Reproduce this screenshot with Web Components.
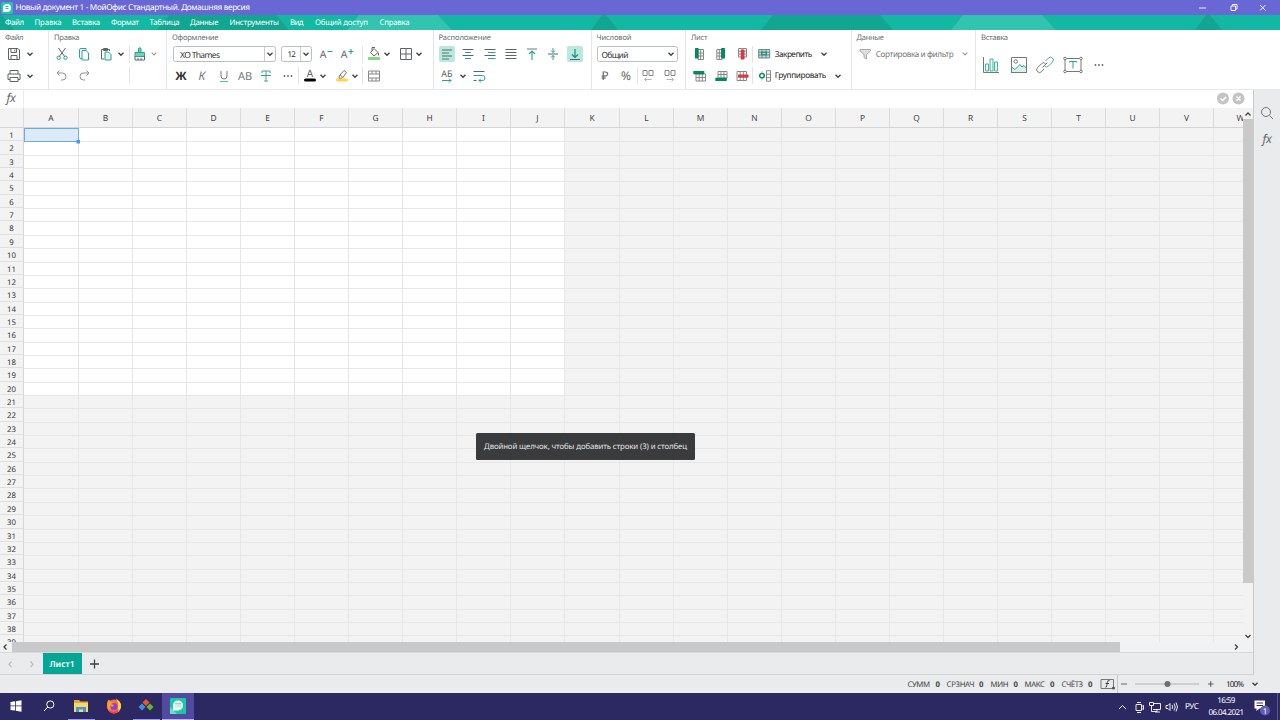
<!DOCTYPE html>
<html lang="ru">
<head>
<meta charset="utf-8">
<title>МойОфис Таблица</title>
<style>
html,body{margin:0;height:100%;overflow:hidden;background:#f3f3f3}
body{font-family:"Noto Sans","Open Sans",sans-serif;font-size:8px;color:#333;text-rendering:geometricPrecision}
</style>
</head>
<body>
<office-app></office-app>
<script>
const define = (name, css, html, after) => customElements.define(name, class extends HTMLElement {
  connectedCallback() {
    if (this.shadowRoot) return;
    const root = this.attachShadow({mode: 'open'});
    const body = typeof html === 'function' ? html(this) : html;
    root.innerHTML = `<style>*{box-sizing:border-box}:host{box-sizing:border-box;display:block}${css}</style>${body}`;
    if (after) after(this, root);
  }
});

/* Text whose tracking is tuned so that it takes a given width */
define('fit-text', ':host{display:inline-block;white-space:nowrap;flex:none;line-height:1.3;padding-top:2px}', '<slot></slot>', el => {
  const w = +el.getAttribute('w'), n = el.textContent.length;
  const range = document.createRange();
  range.selectNodeContents(el);
  const natural = range.getBoundingClientRect().width;
  if (w && n > 1) el.style.letterSpacing = ((w - natural) / (n - 1)).toFixed(3) + 'px';
});
const T = (text, w, style = '') => `<fit-text w="${w}" style="${style}">${text}</fit-text>`;

const G = '#5e6468', M = '#27a592', R = '#d93a45', D = '#008b57';
const p = (d, c = G, w = 1, f = 'none') => `<path d="${d}" stroke="${c}" stroke-width="${w}" fill="${f}"/>`;
const glyph = (ch, x, y, size, c = G, extra = '') => `<text x="${x}" y="${y}" font-size="${size}" fill="${c}" text-anchor="middle" ${extra}>${ch}</text>`;
const box = (x, y, w, h, c) => `<rect x="${x}" y="${y}" width="${w}" height="${h}" rx=".4" fill="${c}"/>`;
const ICONS = {
  save: p('M2.500 2.500H12l1.500 1.500v9.500h-11zM5 2.500v4h5.500v-4M5 13V9.500h6V13M8.800 3.500v2'),
  print: p('M4 6V2.500h8V6M4 11.500H2V6h12v5.500h-2M4 9.500h8v4H4z'),
  cut: p('M4.500 2L11 11M11.500 2L5 11') + p('M3 11.800a1.700 1.700 0 1 0 3.400 0a1.700 1.700 0 1 0-3.400 0M9.800 11.800a1.700 1.700 0 1 0 3.400 0a1.700 1.700 0 1 0-3.400 0', M),
  copy: p('M6 12.500H5a1.500 1.500 0 0 1-1.500-1.500V4A1.500 1.500 0 0 1 5 2.500h5V4.500', M) + p('M6 4.500h4l2.500 2.500v7H6z', M, 1, '#fff'),
  paste: p('M6 13H3.500V3.500h8V5M5.500 4.500v-2h4v2z') + p('M7 6h3.500L13 8.500V14H7z', M, 1, '#def3ef'),
  brush: p('M6.500 6V3a1.200 1.200 0 0 1 2.500 0V6M3 10.500V6.500H12.500V10.500z', M, 1, '#6fd1bc') + p('M3 10v4h9.500v-4M6 14v-2M9 14v-2'),
  undo: p('M5.500 2.500L3 5l2.500 2.500M3 5h5.500a3 3 0 0 1 0 7H7', '#8b8f92'),
  redo: p('M10.500 2.500L13 5l-2.500 2.500M13 5H7.500a3 3 0 0 0 0 7H9', '#8b8f92'),
  bold: glyph('Ж', 8, 12, 11.5, '#333', 'font-weight="700"'),
  italic: glyph('К', 8, 12, 12, '#777', 'font-style="italic"'),
  under: p('M5 3v5a3 3 0 0 0 6 0V3', '#777') + p('M4 13.500h8', '#62c2b0', 1.200),
  caps: glyph('АВ', 8, 12, 11, '#777'),
  strike: p('M4 5V3h8v2M8 3v10M6 13h4', '#4f9d92') + p('M3 7.500h10', M),
  dots: '<g fill="#666"><circle cx="4.500" cy="8" r=".9"/><circle cx="8" cy="8" r=".9"/><circle cx="11.500" cy="8" r=".9"/></g>',
  fontcol: glyph('А', 8, 9, 10, '#555') + box(2, 10.500, 12, 3, '#000').replace('rx=".4"', 'rx="1.500"'),
  marker: p('M5 10.500l.5-3 4.500-5 2.500 2-4 5.500zM6 7l2.500 2', '#777') + box(2, 10.500, 12, 3, '#ffd53f').replace('rx=".4"', 'rx="1.500"'),
  aminus: glyph('A', 6, 12, 10.500, '#666') + p('M10.500 5.500h5', M, 1.100),
  aplus: glyph('A', 6, 12, 10.500, '#666') + p('M10.500 5.500h5M13 3v5', M, 1.100),
  fill: p('M8 2.500L12 6.500 8 10 4.500 6.500zM6 5V1.500h3M12.500 7v2.500', '#666') + box(2, 11, 12, 3, '#86d68a'),
  border: p('M2.500 2.500h11v11h-11zM8 2.500v11M2.500 8h11'),
  merge: p('M2.500 3h11v10h-11zM2.500 6h11M2.500 10h11M6 3v3M10 3v3M6 10v3M10 10v3', '#888'),
  left: p('M3 4h10M3 10h10') + p('M3 7h7M3 13h7', '#3c8479'),
  center: p('M2.500 3.500h11M2.500 9.500h11') + p('M5 6.500h6M5 12.500h6', M),
  right: p('M2.500 3.500h11M2.500 9.500h11') + p('M6 6.500h7.500M6 12.500h7.500', M),
  justify: p('M2.500 3.500h11M2.500 6.500h11M2.500 9.500h11M2.500 12.500h11'),
  top: p('M3 3h10', '#777') + p('M8 14V5M5 8l3-3 3 3', M, 1.100),
  middle: p('M3 8h10') + p('M8 2v4.500M6 4.500l2 2 2-2M8 14V9.500M6 11.500l2-2 2 2', M),
  bottom: p('M3 13.500h10') + p('M8 3v8.500M5 8.500l3 3 3-3', '#168d7c', 1.200),
  abdir: glyph('АБ', 8, 9, 9) + p('M3 12.500h9M10 10.500l2 2-2 2', M),
  wrap: p('M2.500 3.500h11M2.500 12.500h3') + p('M2.500 7.500h9a2.500 2.500 0 0 1 0 5H8M10 10.500l-2 2 2 2', M),
  rub: glyph('₽', 8, 12.300, 12, '#666'),
  pct: glyph('%', 8, 12, 12, '#666'),
  decl: p('M3 2.500h4v5h-4zM9 2.500h4v5h-4z', '#888') + p('M4.500 11.500h7M6.500 9.500l-2 2 2 2', '#b5b5b5'),
  decr: p('M3 2.500h4v5h-4zM9 2.500h4v5h-4z', '#888') + p('M4.500 11.500h7M9.500 9.500l2 2-2 2', '#b5b5b5'),
  colL: p('M7 3.500h5.500v10H7zM9.700 3.500v10M7 7h5.500M7 10h5.500', '#888') + box(4, 2, 3.600, 10.500, D),
  colR: p('M3.800 3.500H9v10H3.800zM6.300 3.500v10M3.800 7H9M3.800 10H9', '#888') + box(8.100, 2, 3.900, 10.500, D),
  colD: p('M4.500 2.500h8v8.500h-8zM4.500 5.200h8M4.500 8h8', '#888') + box(6.700, 3.500, 3.800, 10, R),
  rowT: p('M5 6h9.500v7H5zM8.200 6v7M11.300 6v7M5 9.500h9.500', '#888') + box(2.300, 3, 11, 3.300, D),
  rowB: p('M5 3.500h9v6.500H5zM8 3.500v6.500M11 3.500v6.500M5 6.500h9', '#888') + box(2.300, 9.700, 11.500, 3.300, D),
  rowD: p('M3 3.500h9.500v9H3zM6.200 3.500v9M9.300 3.500v9', '#888') + box(4, 6.500, 10.500, 3.200, R),
  freeze: p('M2.700 3.500h11v8.500h-11zM2.700 9h11M2.700 6.200h11M6 3.500v8.500M10 3.500v8.500', '#61807c', .9, '#b9e2da') + p('M5.500 6.200h5v2.500h-5z', '#168c7a', 1),
  group: p('M10.500 2.700h4v10.500h-4zM10.500 6.200h4M10.500 9.700h4', '#888') + p('M3.700 7.700a2.300 2.300 0 1 0 4.600 0a2.300 2.300 0 1 0-4.600 0', D, 1.500) + p('M6 3v2M6 10.500v2', '#7cc7a8', .8),
  filter: p('M3 3.500h10.500v1.500L9.500 8.500V13l-2.500-1.500v-3L3 5z', '#aaa', 1, '#ddd'),
  search: p('M2.500 7a4.500 4.500 0 1 0 9 0a4.500 4.500 0 1 0-9 0M10.500 10.500l3.500 3.500', '#777'),
  fx: glyph('fx', 8, 12, 12, '#666', 'font-style="italic" letter-spacing="-.3"'),
  chev: p('M5.500 6.700L8 9.200l2.500-2.500', '#444', 1.400),
  chevd: p('M5.700 6.700L8 9l2.300-2.300', '#999', 1.100),
  plus: p('M4 8h9M8.500 3.500v9', '#444', 1.300),
  prev: p('M8.500 5.500L6 8.300l2.500 2.800', '#bbb', 1.200),
  next: p('M6.500 5.500L9 8.300l-2.500 2.800', '#bbb', 1.200)
};
const BIG = {
  chart: p('M2.500 2v15.500H18', '#777') + p('M4.500 16V9h3v7zM9 16V4h3v12zM13.500 16V7h3v9z', '#49b3a3', 1, '#e6f7f3'),
  image: p('M2.500 12l3.500 2.500 5-5 2 2.500 2-1.500 2.500 3v4h-15z', M, 1, '#d8f1ec') + p('M2.500 2.500h15v15h-15zM5 6.500a1.700 1.700 0 1 0 3.400 0a1.700 1.700 0 1 0-3.400 0', '#777'),
  link: p('M10.500 6l3-3a2.700 2.700 0 0 1 4 4l-4 4a2.700 2.700 0 0 1-4 0', '#5aa79c') + p('M9 14l-2.500 2.700a2.700 2.700 0 0 1-4-4l4-4a2.700 2.700 0 0 1 4 0M7.500 12.500l5-5', '#777'),
  box: p('M2 3.500h16v13H2z', '#777') + p('M6.500 7.500V6.500h7v1M10 6.500v7', M) + '<g fill="#fff" stroke="#777"><circle cx="2" cy="3.500" r="1.300"/><circle cx="18" cy="3.500" r="1.300"/><circle cx="2" cy="16.500" r="1.300"/><circle cx="18" cy="16.500" r="1.300"/></g>'
};
define('ui-icon', ':host{display:block;width:16px;height:16px;flex:none}svg{display:block;overflow:visible}:host([active]){background:#b9e8df;border-radius:2px}:host([big]){width:20px;height:20px}',
  el => { const n = el.getAttribute('name'), b = el.hasAttribute('big'), s = b ? 20 : 16;
    return `<svg width="${s}" height="${s}" viewBox="0 0 ${s} ${s}">${(b ? BIG : ICONS)[n]}</svg>`; });

define('drop-box', ':host{display:flex;align-items:center;height:16px;border:1px solid #b9c0c4;border-radius:2.500px;background:#fff;flex:none;color:#333;font-size:8.500px;padding-left:6px}.t{flex:1;display:flex}.c{width:11px;height:14px;display:flex;align-items:center;justify-content:center;border-left:1px solid #c8cdd0}:host([plain]) .c{border:0}',
  '<span class="t"><slot></slot></span><span class="c"><ui-icon name="chev"></ui-icon></span>');

/* A toolbar row: items are [centre, width, markup], spaced from the group's left edge */
const row = (start, items, h = 21.500) => {
  let x = start;
  return `<div class="row" style="height:${h}px">` + items.map(([c, w, html]) => {
    const m = c - w / 2 - x; x = c + w / 2;
    return `<span class="it" style="width:${w}px;margin-left:${m}px">${html}</span>`;
  }).join('') + '</div>';
};
const I = (c, n, a = '') => [c, 16, `<ui-icon name="${n}" ${a}></ui-icon>`];
const L = (x, w, t, st) => [x + w / 2, w, T(t, w, st)];
const S = c => [c, 1, '<i class="sep"></i>'];

define('tool-group', ':host{flex:none;height:59px;border-right:1px solid #e3e6e8;padding-top:2.500px}:host(:last-child){border:0;flex:1}.h{height:11px;display:flex;align-items:center;padding-left:5px;color:#697075;font-size:7.600px}.row{display:flex;align-items:center}.it{display:flex;flex:none;justify-content:center;align-items:center}.sep{width:1px;height:17px;background:#e2e5e7}',
  el => { const g = GROUPS[+el.getAttribute('index')]; return `<div class="h">${T(g.t, g.tw)}</div>${g.rows.map(r => row(g.x, r, g.h)).join('')}`; });

const GROUPS = [
  {t: 'Файл', tw: 18.500, x: 0, w: 49, rows: [[I(14, 'save'), I(30, 'chev')], [I(14, 'print'), I(30, 'chev')]]},
  {t: 'Правка', tw: 25.500, x: 49, w: 118, rows: [[I(61.500, 'cut'), I(83.500, 'copy'), [105.500, 15, '<ui-icon name="paste"></ui-icon>'], [120.500, 14, '<ui-icon name="chev"></ui-icon>'], S(129.500), [140, 14, '<ui-icon name="brush"></ui-icon>'], [153.500, 12, '<ui-icon name="chevd"></ui-icon>']], [I(61.500, 'undo'), I(83.500, 'redo'), S(129.500)]]},
  {t: 'Оформление', tw: 46.500, x: 167, w: 266.500, rows: [
    [[224.500, 103, `<drop-box style="width:103px">${T('XO Thames', 40)}</drop-box>`], [296.700, 30.500, `<drop-box style="width:30.500px;padding-left:5px">${T('12', 8.500, 'font-size:8px')}</drop-box>`], I(325.500, 'aminus'), I(346.500, 'aplus'), S(362.500), [374, 14, '<ui-icon name="fill"></ui-icon>'], [387.500, 12, '<ui-icon name="chev"></ui-icon>'], [406, 14, '<ui-icon name="border"></ui-icon>'], [419.500, 12, '<ui-icon name="chev"></ui-icon>']],
    [I(180.500, 'bold'), I(201.500, 'italic'), I(223.500, 'under'), I(245, 'caps'), I(265.500, 'strike'), [287.500, 14, '<ui-icon name="dots"></ui-icon>'], S(298.500), [309.500, 14, '<ui-icon name="fontcol"></ui-icon>'], [322.500, 12, '<ui-icon name="chev"></ui-icon>'], [341.500, 14, '<ui-icon name="marker"></ui-icon>'], [354.500, 12, '<ui-icon name="chev"></ui-icon>'], S(362.500), [373.500, 16, '<ui-icon name="merge"></ui-icon>']]]},
  {t: 'Расположение', tw: 52.500, x: 433.500, w: 158, rows: [
    [I(446.500, 'left', 'active'), I(468, 'center'), I(489.500, 'right'), I(510.500, 'justify'), I(532, 'top'), I(553, 'middle'), I(574.500, 'bottom', 'active')],
    [[446.500, 16, '<ui-icon name="abdir"></ui-icon>'], [462.500, 14, '<ui-icon name="chev"></ui-icon>'], [478.500, 16, '<ui-icon name="wrap"></ui-icon>']]]},
  {t: 'Числовой', tw: 35, x: 591.500, w: 94.500, rows: [
    [[637, 81, `<drop-box plain style="width:81px;padding-left:4px">${T('Общий', 27)}</drop-box>`]],
    [I(604.500, 'rub'), I(625.500, 'pct'), S(637), I(648, 'decl'), I(670, 'decr')]]},
  {t: 'Лист', tw: 16.500, x: 686, w: 165.500, rows: [
    [I(699, 'colL'), I(720.500, 'colR'), I(742, 'colD'), S(752.500), [764, 16, '<ui-icon name="freeze"></ui-icon>'], L(774.500, 37.500, 'Закрепить', 'font-size:8.200px;color:#222'), I(823.500, 'chev')],
    [I(699, 'rowT'), I(720.500, 'rowB'), I(742, 'rowD'), S(752.500), [764, 16, '<ui-icon name="group"></ui-icon>'], L(774.500, 51.500, 'Группировать', 'font-size:8.200px;color:#222'), I(837.500, 'chev')]]},
  {t: 'Данные', tw: 27.500, x: 851.500, w: 124.500, rows: [[I(865, 'filter'), L(875.500, 78, 'Сортировка и фильтр', 'font-size:8.200px;color:#777'), I(964.500, 'chevd')]]},
  {t: 'Вставка', tw: 27, x: 976, w: 304, h: 43, rows: [[...[['chart', 991], ['image', 1018.500], ['link', 1045], ['box', 1072.500]].map(([n, c]) => [c, 20, `<ui-icon big name="${n}"></ui-icon>`]), I(1099, 'dots')]]}
];
define('tool-bar', ':host{display:flex;height:60px;background:#fff;border-bottom:1px solid #e6e9ea;flex:none}',
  GROUPS.map((g, i) => `<tool-group index="${i}" style="width:${g.w}px"></tool-group>`).join(''));

define('title-bar', ':host{display:flex;align-items:center;height:15px;background:#6967d3;color:#fff;font-size:8.200px;flex:none;padding:0 13px 0 1px}.ctl{margin-left:auto}fit-text{margin-left:2.500px}',
  `<svg width="12" height="12"><rect width="12" height="12" rx="2" fill="#20c8a5"/><circle cx="6" cy="6" r="4" fill="#fff"/><path d="M2 5v5h4z" fill="#fff"/><path d="M4.500 4.500h3M4.500 6.500h3" stroke="#20bfa0"/></svg>${T('Новый документ 1 - МойОфис Стандартный. Домашняя версия', 234.500)}
  <svg class="ctl" width="70" height="14" fill="none" stroke="#fff" stroke-width=".9"><path d="M2 7h7M34 5h4.500v4.500H34zM35.500 5V3.500h4.500v4.500h-1.500M63 4l5.500 5.500M68.500 4L63 9.500"/></svg>`);

const tri = [-604, 0, 604].map(o => `<path fill="#10a692" d="M${o + 591} 15l11-15h4l12 15zM${o + 761} 15l12-15h107l13 15z"/><path fill="#31c4b0" d="M${o + 951} 15l12-15h79l14 15z"/>`).join('');
define('menu-bar', ':host{display:grid;height:15px;background:#13b8a2;color:#fff;font-size:7.800px;flex:none}svg,nav{grid-area:1/1}nav{display:flex;align-items:center;padding-left:5px}',
  `<svg width="1280" height="15">${tri}</svg><nav>` + (() => { let x = 5; return [['Файл', 5, 19], ['Правка', 34.500, 27], ['Вставка', 72, 28], ['Формат', 111, 28], ['Таблица', 149.500, 30], ['Данные', 190, 28.500], ['Инструменты', 229.500, 49.500], ['Вид', 290, 13.500], ['Общий доступ', 315, 53], ['Справка', 379.500, 30]].map(([t, l, w]) => { const s = T(t, w, `width:${w}px;margin-left:${l - x}px`); x = l + w; return s; }).join(''); })() + '</nav>');

define('formula-bar', ':host{display:flex;align-items:center;height:18px;background:#fff;flex:none;border-bottom:0}.fx{width:24px;height:18px;padding:0 3px;border-right:1px solid #ececec}.b{margin-left:auto;margin-right:8px}',
  '<div class="fx"><ui-icon name="fx"></ui-icon></div><svg class="b" width="28" height="14"><g fill="#c4c4c4"><circle cx="6" cy="6.500" r="6"/><circle cx="21.500" cy="6.500" r="6"/></g><path d="M3.500 6.500l2 2 3.500-3.500M19.500 4.500l4 4M23.500 4.500l-4 4" fill="none" stroke="#fff" stroke-width="1.500"/></svg>');

const cx = n => Math.floor(24.250 + 54.070 * n), ry = n => Math.round(13.350 * n);
define('sheet-grid', `:host{flex:1;min-width:0;overflow:hidden;display:grid;grid-template:20px 1fr/24px 1fr;background:#f3f3f3}
.cols{display:flex;overflow:hidden;border-bottom:1px solid #d4d4d4;font-size:8.400px;color:#444}.cols div,.corner{border-right:1px solid #dadada;flex:none;display:flex;align-items:center;justify-content:center}.cols div{padding-top:1px}.corner{border-bottom:1px solid #d4d4d4}
.rows{overflow:hidden;border-right:1px solid #d6d6d6;font-size:7.800px}.rows div{display:flex;align-items:center;justify-content:center;border-bottom:1px solid #e0e0e0;padding-top:3px;line-height:10px}
.cells{overflow:hidden}svg{display:block}`, () => {
  let lines = '';
  for (let i = 1; i < 23; i++) lines += `<rect x="${cx(i) - 24}" y="0" width="1" height="520" fill="#e7e7e7"/>`;
  for (let i = 1; i < 39; i++) lines += `<rect x="0" y="${ry(i)}" width="1230" height="1" fill="#e7e7e7"/>`;
  return `<div class="corner"></div><div class="cols">${[...'ABCDEFGHIJKLMNOPQRSTUVW'].map((c, i) => `<div style="width:${cx(i + 1) - (i ? cx(i) : 23)}px">${c}</div>`).join('')}</div>
  <div class="rows">${Array.from({length: 39}, (_, i) => `<div style="height:${ry(i + 1) - ry(i)}px">${i + 1}</div>`).join('')}</div>
  <div class="cells"><svg width="1230" height="520"><rect width="540" height="267" fill="#fff"/>${lines}<rect x=".5" y=".5" width="54" height="13" fill="#dbebfa" stroke="#69aaf0"/><rect x="52.500" y="12" width="3.500" height="3.500" fill="#4b98ef"/></svg></div>`;
});

define('v-scroll', ':host{width:10px;flex:none;background:#f2f2f2;display:flex;flex-direction:column}.th{height:464px;background:#c9c9c9;margin-top:11px}svg{margin-top:auto;margin-bottom:0}',
  '<svg width="10" height="11" style="margin:0 0 -11px" fill="none" stroke="#444" stroke-width="1.300"><path d="M2.500 7.500L5 5l2.500 2.500"/></svg><div class="th"></div><svg width="10" height="12" fill="none" stroke="#444" stroke-width="1.300"><path d="M2.500 5L5 7.500 7.500 5"/></svg>');
define('h-scroll', ':host{height:11px;flex:none;background:#f2f2f2;display:flex;border-bottom:1px solid #d6d9dc}.th{width:1108px;height:10px;background:#c9c9c9}svg{flex:none}.r{margin-left:auto;margin-right:11px}',
  '<svg width="12" height="10" fill="none" stroke="#444" stroke-width="1.300"><path d="M6.500 2.500L4 5l2.500 2.500"/></svg><div class="th"></div><svg class="r" width="11" height="10" fill="none" stroke="#444" stroke-width="1.300"><path d="M4 2.500L6.500 5 4 7.500"/></svg>');

define('sheet-tabs', ':host{display:flex;align-items:center;height:22px;background:#e9ebed;flex:none;padding-left:2.500px;border-bottom:1px solid #cfd3d6}.tab{height:21px;width:39px;margin-left:3px;background:#05a794;color:#fff;font-size:8.500px;font-weight:600;display:flex;align-items:center;justify-content:center}.n{margin-left:5px}.p{margin-left:4px}',
  `<ui-icon name="prev"></ui-icon><ui-icon class="n" name="next"></ui-icon><div class="tab">${T('Лист1', 25)}</div><ui-icon class="p" name="plus"></ui-icon>`);

define('status-bar', ':host{display:flex;align-items:center;height:18px;background:#e9ebed;flex:none;padding-left:907.500px;font-size:7.800px;color:#444}fit-text{flex:none}svg{flex:none}', () => {
  let x = 907.500, out = '';
  const add = (t, l, w, st = '') => { out += T(t, w, `width:${w}px;margin-left:${l - x}px;${st}`); x = l + w; };
  [['СУММ', 907.500, 22.500, 935.500], ['СРЗНАЧ', 946.500, 28, 979], ['МИН', 990.500, 18, 1013.500], ['МАКС', 1024.500, 20.500, 1050], ['СЧЁТЗ', 1061.500, 21.500, 1088]].forEach(([t, l, w, z]) => { add(t, l, w); add('0', z, 4.500, 'font-weight:700'); });
  out += `<svg width="138" height="18" style="margin-left:${1100 - x}px"><path d="M1 4.500h12.500v9H1z" fill="none" stroke="#777"/><path d="M9.500 5.500q-2-.5-2.200 2l-.5 3q0 2-1.500 1.500M5.500 8.500h3.500" fill="none" stroke="#444" stroke-width="1"/><circle cx="13.500" cy="13" r="1.500" fill="#555"/><path d="M17.500 0v18" stroke="#c8c8c8"/><path d="M21 9h6M108 9h5.500M110.700 6.300v5.500" stroke="#666" stroke-width="1.200"/><path d="M35 9h64" stroke="#c6c6c6" stroke-width="1.500"/><circle cx="67.500" cy="9" r="3" fill="#707070"/></svg>`;
  x = 1238; add('100%', 1226, 18, 'font-size:8.200px;color:#222');
  return out + '<ui-icon name="chev" style="margin-left:2.500px"></ui-icon>';
});

define('side-bar', ':host{width:27px;flex:none;background:#e9ebed;border-left:1px solid #c9cccf;display:flex;flex-direction:column;align-items:center;padding-top:14.500px;gap:10.500px}', '<ui-icon name="search"></ui-icon><ui-icon name="fx"></ui-icon>');

define('task-bar', `:host{display:flex;height:27px;background:#2c2861;color:#fff;flex:none}
.app{width:32.500px;display:flex;align-items:center;justify-content:center;border-bottom:1px solid transparent}.run{width:26.500px;margin:0 3px;border-color:#9b93ff;border-bottom-width:1.500px}.on{width:32px;background:#514aa0;border-color:#b8b3ff;border-bottom-width:1.500px;margin-left:-1px}
.tray{margin-left:auto;display:flex;align-items:center;font-size:8px}.time{width:40px;display:flex;flex-direction:column;align-items:center;line-height:12px}.time fit-text{line-height:12px;padding:0}`,
`<div class="app"><svg width="12" height="12" fill="#fff"><path d="M.5 2L5 1.300v4.200H.5zM5.800 1.200L11.500.3v5.200H5.800zM.5 6.300H5v4.300L.5 10zM5.800 6.300h5.700v5.400l-5.700-.9z"/></svg></div>
<div class="app"><svg width="12" height="12" fill="none" stroke="#fff"><circle cx="7.300" cy="4.500" r="3.600"/><path d="M4.800 7L1 11"/></svg></div>
<div class="app run"><svg width="16" height="14"><path d="M1 1h5l1.500 1.500H15V13H1z" fill="#e8a63a"/><path d="M1 4h14v9H1z" fill="#ffd768"/><path d="M3 13V8h10v5h-3v-2.500H6V13z" fill="#3d98d8"/></svg></div>
<div class="app"><svg width="16" height="16"><circle cx="8" cy="8.500" r="7" fill="#ff6b35"/><path d="M10 .5q6 4 5 9-1 3-3 4.500V5z" fill="#ffd33d"/><path d="M1 6q0-3 2-4.500L5 4l3 1-5 8Q1 10 1 6z" fill="#ff9b2f"/><path d="M2 11q5 6 11 0-1 4-5 4.500-4 0-6-4.500z" fill="#f33b65"/><circle cx="8" cy="8.500" r="3.500" fill="#8e42d0"/><path d="M4 6l4 1-2 2z" fill="#ffad35"/></svg></div>
<div class="app run"><svg width="16" height="14"><path d="M8 0l3.500 3.500L8 7 4.500 3.500z" fill="#ea542b"/><path d="M4 4.500l3.500 3.500L4 11.500.5 8z" fill="#438edb"/><path d="M12 4.500l3.500 3.500-3.500 3.500L8.500 8z" fill="#67b52b"/></svg></div>
<div class="app on"><svg width="16" height="16"><rect width="16" height="16" rx="1" fill="#19c9a2"/><path d="M0 16V9l7 7z" fill="#69dec6"/><circle cx="8" cy="7.500" r="5" fill="#fff"/><path d="M3 7v5.500h5z" fill="#fff"/><path d="M5 5.500h6M6 5.500v4M8 5.500v4M10 5.500v4" stroke="#7fd8c6" stroke-width=".9"/></svg></div>
<div class="tray"><svg width="63" height="16" style="margin-right:2.500px" fill="none" stroke="#fff" stroke-width=".9"><path d="M3 10l3.500-3.500L10 10M20 5.500h5.500v6H20zM25.500 7.500l2-1v4l-2-1M21 3.500h4M21 13.500h4M37 4.500h7.500v6H37M33.500 3.500h4v3h-4zM35.500 6.500v6H41M41 10.500v2M39 13h5M50 6.500h2l2-2v7l-2-2h-2zM56 6q1.500 2 0 4M58 4.500q2.500 3.500 0 7M60 3.500q3 4.500 0 9"/></svg>
<fit-text w="14" style="margin-left:3px;margin-right:7.500px;font-size:8.200px">РУС</fit-text><div class="time">${T('16:59', 18)}${T('06.04.2021', 35.500)}</div>
<svg width="26" height="22" style="margin-left:2px"><path d="M6.500 4.500H17v8h-5.500l-3 2.500v-2.500h-2z" fill="#fff"/><path d="M8.500 7h6.500M8.500 9.500h6.500" stroke="#2c2861"/><circle cx="17" cy="14.500" r="5" fill="#625bb3"/><text x="17" y="17.500" text-anchor="middle" fill="#fff" font-size="8">1</text></svg><svg width="6" height="27"><path d="M3.500 0v27" stroke="#5a568a"/></svg></div>`);

define('hint-tip', ':host{position:absolute;left:476px;top:433px;width:219px;height:27px;background:#3a3b3d;color:#e4e4e4;border-radius:1.500px;display:flex;align-items:center;justify-content:center;font-size:7.800px}', '<slot></slot>');

define('office-app', ':host{display:flex;flex-direction:column;width:1280px;height:720px;position:relative;overflow:hidden;background:#e9ebed}.mid{display:flex;flex:1;min-height:0}.main{flex:1;min-width:0;display:flex;flex-direction:column}.sheet{display:flex;flex:1;min-height:0}',
`<title-bar></title-bar><menu-bar></menu-bar><tool-bar></tool-bar>
<div class="mid"><div class="main"><formula-bar></formula-bar><div class="sheet"><sheet-grid></sheet-grid><v-scroll></v-scroll></div><h-scroll></h-scroll><sheet-tabs></sheet-tabs></div><side-bar></side-bar></div>
<status-bar></status-bar><task-bar></task-bar>
<hint-tip>${T('Двойной щелчок, чтобы добавить строки (3) и столбец', 203)}</hint-tip>`);
</script>
</body>
</html>
